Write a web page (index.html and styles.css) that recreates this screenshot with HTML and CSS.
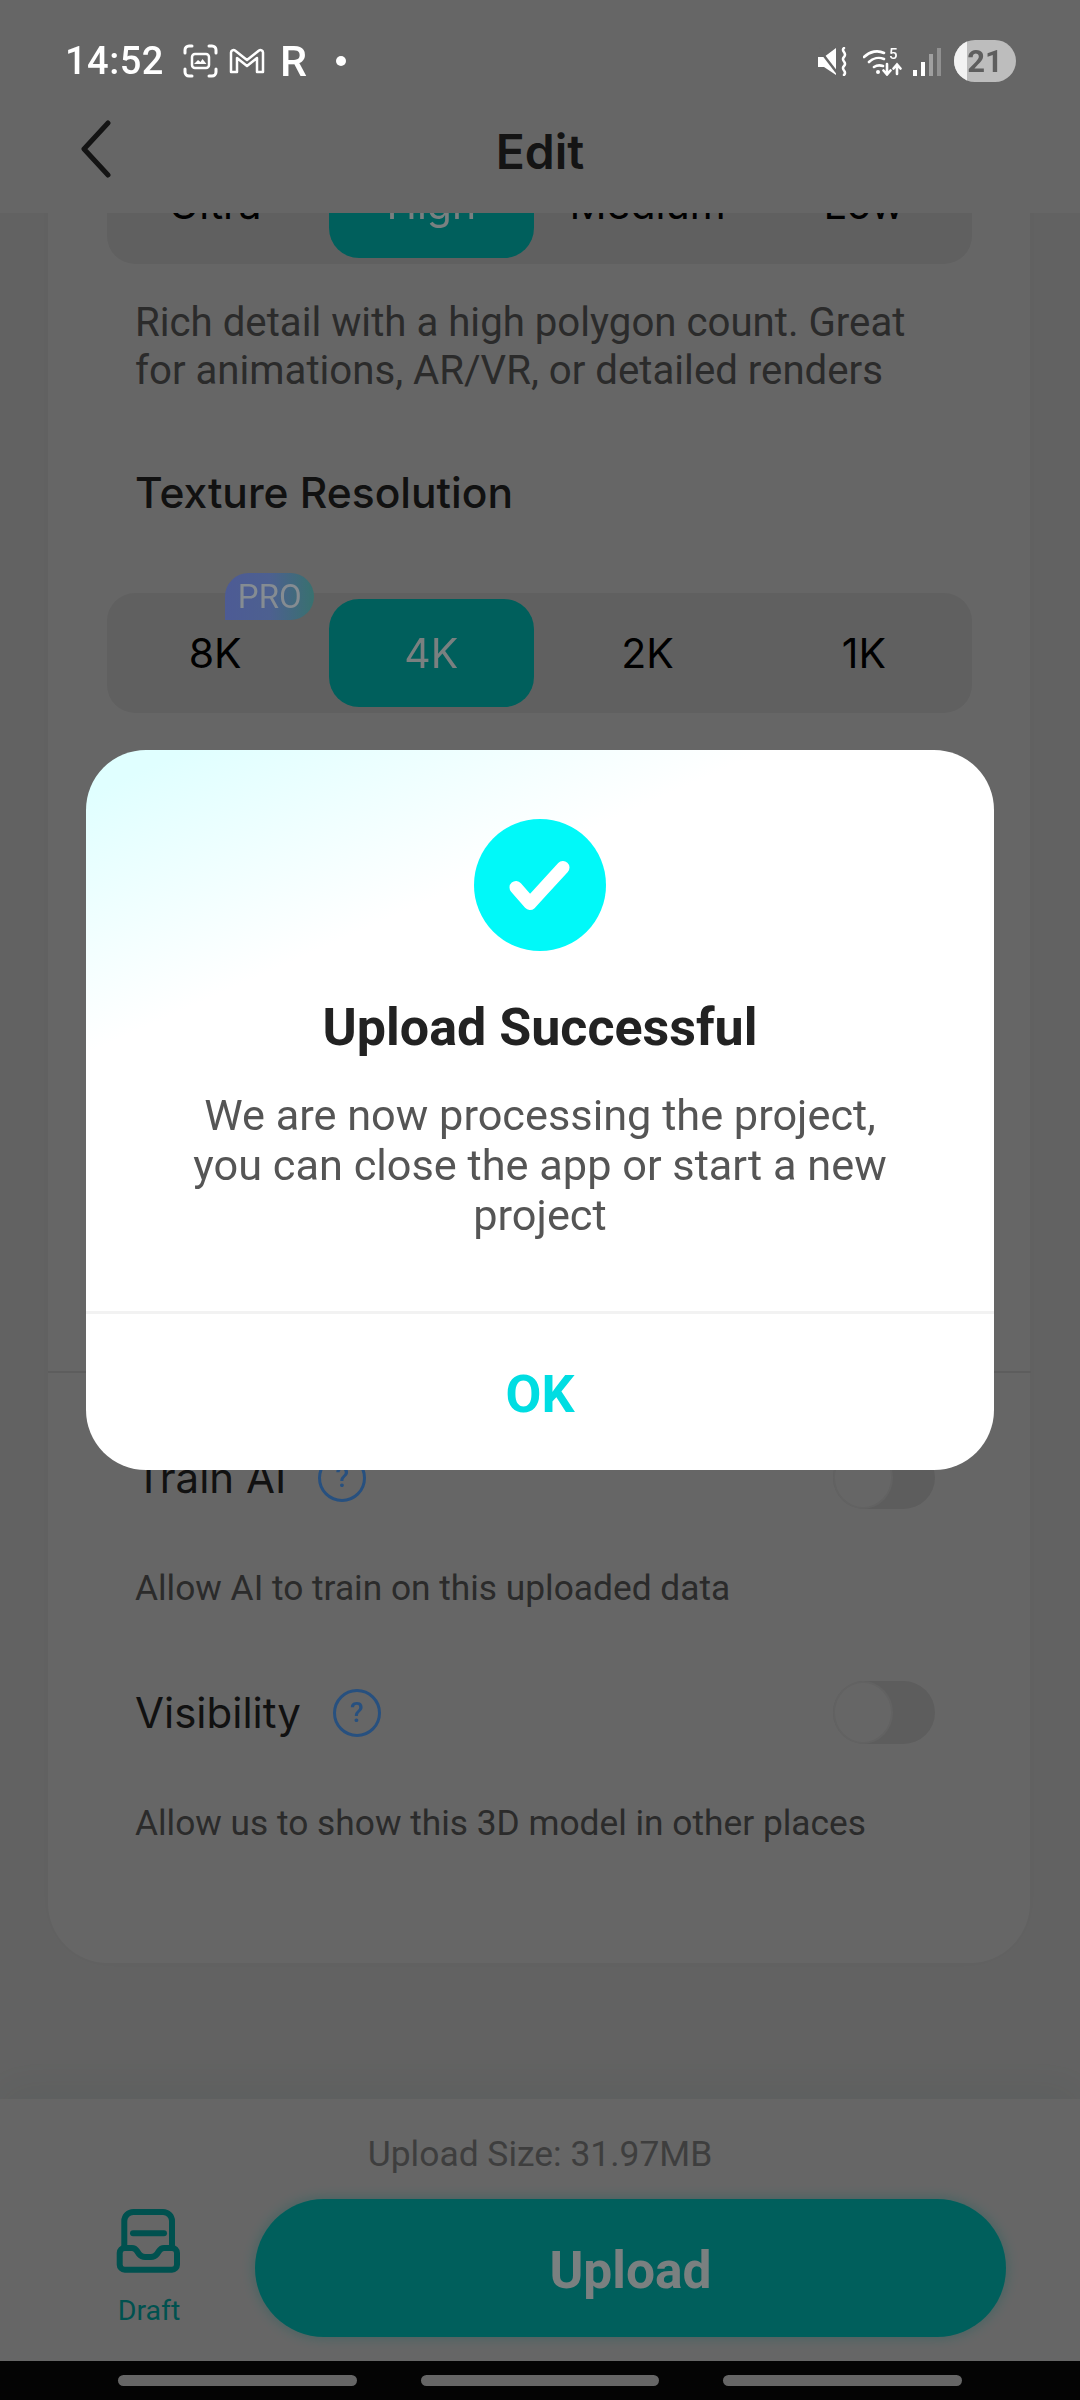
FILE: index.html
```html
<!DOCTYPE html>
<html lang="en">
<head>
    <meta charset="UTF-8">
    <meta name="viewport" content="width=device-width, initial-scale=1.0">
    <title>Edit</title>
    <link rel="stylesheet" href="styles.css">
</head>
<body>
    <div class="page">
        <!-- Status bar stays above the dim layer -->
        <div class="status-bar">
            <div class="status-left">
                <span class="status-time">14:52</span>
                <svg class="icon-shot" viewBox="0 0 35 34" fill="none" stroke="#fff" stroke-width="3" stroke-linecap="round">
                    <path d="M2 9V6a4 4 0 0 1 4-4h3M26 2h3a4 4 0 0 1 4 4v3M2 25v3a4 4 0 0 0 4 4h3M33 25v3a4 4 0 0 1-4 4h-3"/>
                    <rect x="9" y="10" width="17" height="14" rx="3" stroke-width="2.5"/>
                    <path d="M11 20l4-4 2.500 2 2-3 4 5z" fill="#fff" stroke="none"/>
                </svg>
                <svg class="icon-mail" viewBox="0 0 36 26" fill="none" stroke="#fff" stroke-width="2.500" stroke-linejoin="round">
                    <path d="M2 4.500a2.500 2.500 0 0 1 4-2L18 12 30 2.500a2.500 2.500 0 0 1 4 2V24h-6V10l-10 8-10-8v14H2z"/>
                </svg>
                <span class="status-r">R</span>
                <span class="status-dot"></span>
            </div>
            <div class="status-right">
                <svg class="icon-mute" viewBox="0 0 30 29" fill="#fff">
                    <path d="M0 10h6L18 1v27L6 20H0z"/>
                    <path d="M0 1l20 26" stroke="#666" stroke-width="2.500"/>
                    <path d="M26 1c-4 3 4 5 0 9s4 5 0 9 4 5 0 9" fill="none" stroke="#fff" stroke-width="2.500" stroke-linecap="round"/>
                </svg>
                <svg class="icon-wifi" viewBox="0 0 40 30" fill="none" stroke="#fff" stroke-width="2.600" stroke-linecap="round">
                    <path d="M1 11c6-6 14-7 20-4M6 16c4-4 10-5 15-3M11 21c3-2 6-2 9-1"/>
                    <circle cx="15" cy="26" r="2" fill="#fff" stroke="none"/>
                    <path d="M24 18v10M20.500 24.500l3.500 4 3.500-4M34 28V19M30.500 22.500l3.500-4 3.500 4"/>
                </svg>
                <span class="wifi-five">5</span>
                <div class="signal">
                    <span class="bar bar-1"></span>
                    <span class="bar bar-2"></span>
                    <span class="bar bar-3"></span>
                    <span class="bar bar-4"></span>
                </div>
                <div class="battery"><span class="battery-fill"></span><span class="battery-text">21</span></div>
            </div>
        </div>

        <div class="header">
            <svg class="back-icon" viewBox="0 0 32 58" fill="none" stroke="#323232" stroke-width="5" stroke-linecap="round" stroke-linejoin="round">
                <path d="M28 3L4 29l24 26"/>
            </svg>
            <h1 class="header-title">Edit</h1>
        </div>

        <div class="content">
            <div class="card">
                <div class="segment">
                    <div class="segment-item">Ultra</div>
                    <div class="segment-item active"><span class="lift">High</span></div>
                    <div class="segment-item">Medium</div>
                    <div class="segment-item">Low</div>
                </div>
                <p class="segment-note">Rich detail with a high polygon count. Great<br>for animations, AR/VR, or detailed renders</p>

                <h2 class="section-title">Texture Resolution</h2>
                <div class="segment segment-texture">
                    <div class="segment-item">8K<span class="pro-badge">PRO</span></div>
                    <div class="segment-item active"><span class="lift">4K</span></div>
                    <div class="segment-item">2K</div>
                    <div class="segment-item">1K</div>
                </div>

                <div class="card-hidden"></div>

                <div class="option-row option-first">
                    <span class="option-name">Train AI</span>
                    <span class="help-icon">?</span>
                    <span class="toggle"><span class="toggle-knob"></span></span>
                </div>
                <p class="option-note">Allow AI to train on this uploaded data</p>

                <div class="option-row option-second">
                    <span class="option-name">Visibility</span>
                    <span class="help-icon">?</span>
                    <span class="toggle"><span class="toggle-knob"></span></span>
                </div>
                <p class="option-note">Allow us to show this 3D model in other places</p>
            </div>
        </div>

        <div class="bottom-bar">
            <div class="upload-size">Upload Size: 31.97MB</div>
            <div class="bottom-actions">
                <div class="draft">
                    <svg class="draft-icon" viewBox="0 0 66 66" fill="none" stroke="#00cbc6" stroke-width="6" stroke-linecap="round" stroke-linejoin="round">
                        <path d="M8.300 39V12a9 9 0 0 1 9-9H47a9 9 0 0 1 9 9v27"/>
                        <path d="M17 24.300h31"/>
                        <path d="M8.700 39H16q3 0 5 3l2 3q2.500 3 6 3h6q3.500 0 6-3l2-3q2-3 5-3h8a5 5 0 0 1 5 5v11.700a5 5 0 0 1-5 5H8.700a5 5 0 0 1-5-5V44a5 5 0 0 1 5-5z"/>
                    </svg>
                    <span class="draft-label">Draft</span>
                </div>
                <button class="upload-btn"><span class="lift">Upload</span></button>
            </div>
        </div>

        <div class="nav-bar">
            <span class="nav-pill"></span>
            <span class="nav-pill"></span>
            <span class="nav-pill"></span>
        </div>
    </div>

    <!-- Modal -->
    <div class="scrim"></div>
    <div class="modal">
        <div class="dialog">
            <div class="dialog-body">
                <svg class="dialog-check" viewBox="0 0 132 132">
                    <circle cx="66" cy="66" r="66" fill="#00f9f9"/>
                    <path d="M42 68.500l14 16 33-36" fill="none" stroke="#fff" stroke-width="13" stroke-linecap="round" stroke-linejoin="round"/>
                </svg>
                <h2 class="dialog-title">Upload Successful</h2>
                <p class="dialog-text">We are now processing the project,<br>you can close the app or start a new<br>project</p>
            </div>
            <div class="dialog-action">OK</div>
        </div>
    </div>
</body>
</html>
```

FILE: styles.css
```css
* {
    box-sizing: border-box;
}

body {
    margin: 0;
    width: 1080px;
    height: 2400px;
    overflow: hidden;
    font-family: Roboto, sans-serif;
}

h1, h2, p {
    margin: 0;
}

.page {
    display: flex;
    flex-direction: column;
    width: 1080px;
    height: 2400px;
    background: #fff;
}

/* Things that show brighter than the dim layer allows */
.lift {
    position: relative;
    z-index: 11;
    color: #7a8080;
}

/* Status bar */
.status-bar {
    position: relative;
    z-index: 20;
    display: flex;
    justify-content: space-between;
    align-items: center;
    height: 120px;
    padding: 2px 64px 0 65px;
    color: #fff;
}

.status-left,
.status-right {
    display: flex;
    align-items: center;
}

.status-time {
    font-size: 38px;
    font-weight: 500;
    letter-spacing: 0.5px;
}

.icon-shot {
    width: 35px;
    height: 34px;
    margin-left: 19px;
}

.icon-mail {
    width: 36px;
    height: 26px;
    margin-left: 11px;
}

.status-r {
    margin-left: 15px;
    font-size: 43px;
    font-weight: 500;
    line-height: 40px;
}

.status-dot {
    width: 10px;
    height: 10px;
    margin-left: 29px;
    border-radius: 50%;
    background: #fff;
}

.icon-mute {
    width: 30px;
    height: 29px;
}

.icon-wifi {
    width: 40px;
    height: 30px;
    margin-left: 15px;
}

.wifi-five {
    width: 0;
    margin-left: -14px;
    margin-right: 14px;
    margin-top: -14px;
    font-size: 15px;
    font-weight: 500;
}

.signal {
    display: flex;
    align-items: flex-end;
    gap: 4px;
    height: 29px;
    margin-left: 10px;
}

.bar {
    width: 4px;
    background: #fff;
}

.bar-1 {
    height: 6px;
}

.bar-2 {
    height: 14px;
}

.bar-3 {
    height: 22px;
    background: #a0a0a0;
}

.bar-4 {
    height: 28px;
    background: #909090;
}

.battery {
    position: relative;
    display: flex;
    align-items: center;
    justify-content: center;
    width: 62px;
    height: 42px;
    margin-left: 13px;
    overflow: hidden;
    border-radius: 21px;
    background: #bdbdbd;
}

.battery-fill {
    position: absolute;
    top: 0;
    left: 0;
    width: 13px;
    height: 100%;
    background: #f2f2f2;
}

.battery-text {
    position: relative;
    font-size: 31px;
    font-weight: 700;
    color: #5e5e5e;
}

/* Header */
.header {
    position: relative;
    display: flex;
    justify-content: center;
    align-items: center;
    height: 93px;
    background: #fff;
    z-index: 2;
}

.back-icon {
    position: absolute;
    left: 80px;
    top: 0;
    width: 32px;
    height: 58px;
}

.header-title {
    margin-bottom: 30px;
    font-family: Inter, sans-serif;
    font-size: 48px;
    font-weight: 600;
    color: #323232;
}

/* Card */
.content {
    flex: 1;
    overflow: hidden;
    padding: 0 50px 0 48px;
    background: #f5f5f5;
}

.card {
    height: 1819px;
    margin-top: -69px;
    padding: 0 58px 0 59px;
    border-radius: 0 0 60px 60px;
    background: #fff;
    box-shadow: 0 0 30px rgba(0, 0, 0, 0.02);
}

.segment {
    display: flex;
    height: 120px;
    border-radius: 28px;
    background: #f0f0f0;
}

.segment-item {
    position: relative;
    flex: 1;
    display: flex;
    align-items: center;
    justify-content: center;
    margin: 6px;
    border-radius: 30px;
    font-family: Inter, sans-serif;
    font-size: 41px;
    color: #000;
}

.segment-item.active {
    background: #00eee6;
}

.segment-note {
    margin-top: 35px;
    padding-left: 28px;
    font-size: 40.2px;
    line-height: 48px;
    color: #6b6b6b;
}

.section-title {
    margin-top: 73px;
    padding-left: 28px;
    font-family: Inter, sans-serif;
    font-size: 42.5px;
    font-weight: 500;
    line-height: 50px;
    color: #2c2c2c;
}

.segment-texture {
    margin-top: 75px;
}

.pro-badge {
    position: absolute;
    top: -26px;
    right: 3px;
    z-index: 11;
    width: 89px;
    height: 47px;
    border-radius: 24px 24px 24px 0;
    background: linear-gradient(90deg, #4d5b95, #4d6090 50%, #38716f);
    font-family: Roboto, sans-serif;
    font-size: 33px;
    font-weight: 400;
    line-height: 47px;
    text-align: center;
    color: #858c92;
}

/* Part of the card hidden behind the dialog */
.card-hidden {
    height: 660px;
    margin: 0 -59px 0 -59px;
    border-bottom: 2px solid #e8e8e8;
}

.option-row {
    display: flex;
    align-items: center;
    height: 63px;
    padding-left: 28px;
}

.option-first {
    margin-top: 73px;
}

.option-second {
    margin-top: 71px;
}

.option-name {
    font-family: Inter, sans-serif;
    font-size: 42px;
    color: #2c2c2c;
}

.help-icon {
    position: relative;
    z-index: 11;
    display: flex;
    align-items: center;
    justify-content: center;
    width: 48px;
    height: 48px;
    margin-left: 32px;
    border: 3px solid #27507f;
    border-radius: 50%;
    font-size: 28px;
    font-weight: 500;
    color: #27507f;
}

.toggle {
    position: relative;
    width: 102px;
    height: 63px;
    margin-left: auto;
    margin-right: 37px;
    border-radius: 32px;
    background: #e8e8e8;
}

.toggle-knob {
    position: absolute;
    top: 0;
    left: 0;
    width: 60px;
    height: 63px;
    border: 2px solid #f4f4f4;
    border-radius: 50%;
    background: #fff;
}

.option-note {
    margin-top: 57px;
    padding-left: 28px;
    font-size: 35.3px;
    line-height: 44px;
    color: #6b6b6b;
}

/* Bottom bar */
.bottom-bar {
    position: relative;
    height: 262px;
    padding-top: 35px;
    background: #fff;
    box-shadow: 0 -12px 40px rgba(0, 120, 110, 0.06);
}

.upload-size {
    font-size: 35.4px;
    line-height: 41px;
    text-align: center;
    color: #9c9c9c;
}

.bottom-actions {
    display: flex;
    align-items: center;
    margin-top: 24px;
    padding: 0 74px 0 116px;
}

.draft {
    display: flex;
    flex-direction: column;
    align-items: center;
    width: 66px;
}

.draft-icon {
    width: 66px;
    height: 66px;
}

.draft-label {
    margin-top: 19px;
    font-size: 28.5px;
    line-height: 34px;
    color: #00cbc6;
}

.upload-btn {
    width: 751px;
    height: 138px;
    margin-left: 73px;
    padding: 5px 0 0;
    border: none;
    border-radius: 69px;
    background: #00eee6;
    box-shadow: 0 0 14px rgba(0, 238, 230, 0.4);
    font-family: Roboto, sans-serif;
    font-size: 51.5px;
    font-weight: 700;
}

/* Navigation bar */
.nav-bar {
    display: flex;
    gap: 64px;
    height: 39px;
    padding: 14px 118px 0;
    background: #0c0c0c;
}

.nav-pill {
    width: 239px;
    height: 11px;
    border-radius: 6px;
    background: #fff;
}

/* Modal */
.scrim {
    position: fixed;
    top: 0;
    left: 0;
    z-index: 10;
    width: 100%;
    height: 100%;
    background-color: rgba(0, 0, 0, 0.6);
}

.modal {
    position: fixed;
    top: 0;
    left: 0;
    z-index: 12;
    display: flex;
    justify-content: center;
    width: 100%;
    padding-top: 750px;
}

.dialog {
    display: flex;
    flex-direction: column;
    width: 908px;
    height: 720px;
    border-radius: 60px;
    background: linear-gradient(156deg, #e0ffff 4%, #fff 27%);
}

.dialog-body {
    display: flex;
    flex-direction: column;
    align-items: center;
    height: 564px;
    padding-top: 69px;
    border-bottom: 3px solid #f2f2f2;
}

.dialog-check {
    width: 132px;
    height: 132px;
}

.dialog-title {
    margin-top: 47px;
    font-size: 52px;
    font-weight: 700;
    line-height: 60px;
    color: #222;
}

.dialog-text {
    margin-top: 33px;
    font-size: 43.3px;
    line-height: 50px;
    text-align: center;
    color: #555;
}

.dialog-action {
    flex: 1;
    display: flex;
    align-items: center;
    justify-content: center;
    padding-top: 4px;
    font-size: 52px;
    font-weight: 700;
    color: #00dde2;
}
```
